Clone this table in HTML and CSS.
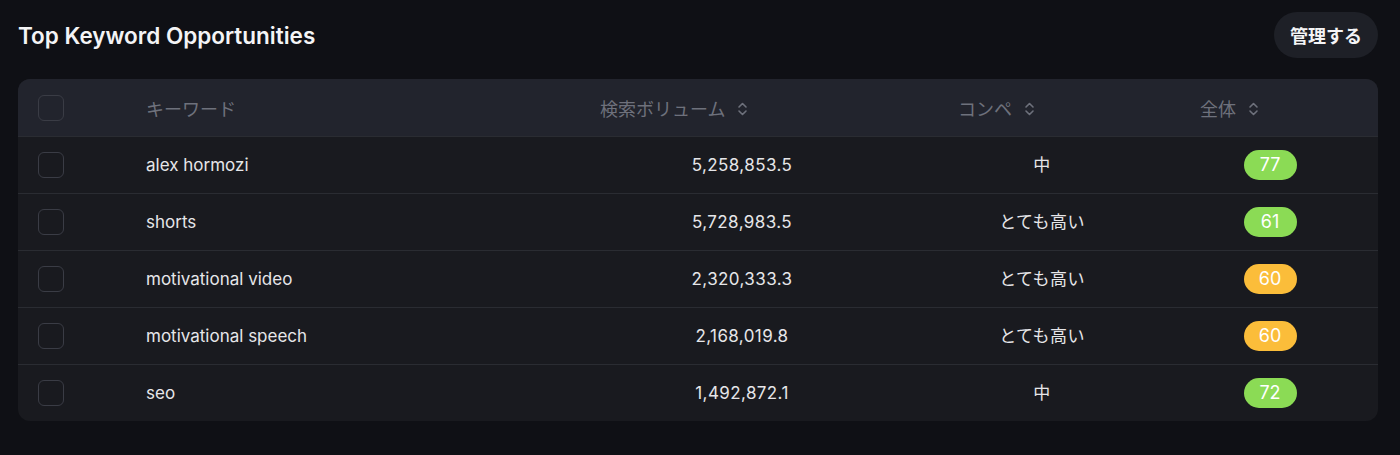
FILE: index.html
```html
<!DOCTYPE html>
<html lang="ja">
<head>
  <meta charset="UTF-8">
  <meta name="viewport" content="width=device-width, initial-scale=1.0">
  <title>Top Keyword Opportunities</title>
  <link rel="stylesheet" href="styles.css">
</head>
<body>
  <div class="panel">
    <div class="panel-head">
      <h2>Top Keyword Opportunities</h2>
      <button class="manage">管理する</button>
    </div>

    <div class="table">
      <div class="row head">
        <div class="cell check"><span class="box"></span></div>
        <div class="cell kw">キーワード</div>
        <div class="cell vol">検索ボリューム <svg class="sort" viewBox="0 0 10 16"><path d="M1.5 6 5 2.5 8.5 6M1.5 10 5 13.5 8.5 10"/></svg></div>
        <div class="cell comp">コンペ <svg class="sort" viewBox="0 0 10 16"><path d="M1.5 6 5 2.5 8.5 6M1.5 10 5 13.5 8.5 10"/></svg></div>
        <div class="cell score">全体 <svg class="sort" viewBox="0 0 10 16"><path d="M1.5 6 5 2.5 8.5 6M1.5 10 5 13.5 8.5 10"/></svg></div>
      </div>

      <div class="row">
        <div class="cell check"><span class="box"></span></div>
        <div class="cell kw">alex hormozi</div>
        <div class="cell vol">5,258,853.5</div>
        <div class="cell comp jp">中</div>
        <div class="cell score"><span class="badge green">77</span></div>
      </div>
      <div class="row">
        <div class="cell check"><span class="box"></span></div>
        <div class="cell kw">shorts</div>
        <div class="cell vol">5,728,983.5</div>
        <div class="cell comp jp">とても高い</div>
        <div class="cell score"><span class="badge green">61</span></div>
      </div>
      <div class="row">
        <div class="cell check"><span class="box"></span></div>
        <div class="cell kw">motivational video</div>
        <div class="cell vol">2,320,333.3</div>
        <div class="cell comp jp">とても高い</div>
        <div class="cell score"><span class="badge orange">60</span></div>
      </div>
      <div class="row">
        <div class="cell check"><span class="box"></span></div>
        <div class="cell kw">motivational speech</div>
        <div class="cell vol">2,168,019.8</div>
        <div class="cell comp jp">とても高い</div>
        <div class="cell score"><span class="badge orange">60</span></div>
      </div>
      <div class="row">
        <div class="cell check"><span class="box"></span></div>
        <div class="cell kw">seo</div>
        <div class="cell vol">1,492,872.1</div>
        <div class="cell comp jp">中</div>
        <div class="cell score"><span class="badge green">72</span></div>
      </div>
    </div>
  </div>
</body>
</html>
```

FILE: styles.css
```css
/* keyword table panel */
* {
  margin: 0;
  padding: 0;
  box-sizing: border-box;
}

body {
  background-color: #0f1015;
  font-family: Inter, "Noto Sans CJK JP", sans-serif;
  color: #e6e6e9;
}

.panel {
  padding: 12px 22px 0 18px;
}

.panel-head {
  display: flex;
  justify-content: space-between;
  align-items: center;
  height: 46px;
  margin-bottom: 21px;
}

.panel-head h2 {
  font-size: 22.5px;
  font-weight: 600;
  color: #f4f4f6;
}

.manage {
  height: 46px;
  padding: 0 16px;
  border: none;
  border-radius: 23px;
  background-color: #1e2027;
  color: #f4f4f6;
  font-family: "Noto Sans CJK JP", sans-serif;
  font-size: 18px;
  font-weight: 700;
}

.table {
  background-color: #191a1f;
  border-radius: 12px;
  overflow: hidden;
}

.row {
  display: grid;
  grid-template-columns: 128px 454px 284px 74px 168px 74px 140px 38px;
  height: 57px;
  align-items: center;
  border-top: 1px solid #2a2c32;
  font-size: 17px;
}

.row.head {
  background-color: #22242d;
  border-top: none;
  color: #6e717c;
  font-size: 18px;
}

.cell {
  display: flex;
  align-items: center;
}

.check {
  grid-column: 1;
  padding-left: 20px;
}

.box {
  width: 26px;
  height: 26px;
  border: 1.5px solid #3a3c45;
  border-radius: 6px;
}

.kw {
  grid-column: 2;
}

.vol {
  grid-column: 3;
  justify-content: center;
  letter-spacing: 0.4px;
}

.comp {
  grid-column: 5;
  justify-content: center;
  letter-spacing: 0.4px;
}

.jp {
  margin-top: -3px;
}

.score {
  grid-column: 7;
  justify-content: center;
}

.head .vol,
.head .comp,
.head .score {
  justify-content: flex-start;
  letter-spacing: 0;
}

.sort {
  width: 11px;
  height: 16px;
  margin-left: 12px;
  margin-top: 2px;
  fill: none;
  stroke: #6e717c;
  stroke-width: 1.6;
  stroke-linecap: round;
  stroke-linejoin: round;
}

.badge {
  display: inline-block;
  min-width: 53px;
  height: 30px;
  line-height: 30px;
  padding: 0 12px;
  border-radius: 15px;
  text-align: center;
  color: #fff;
  font-size: 18px;
}

.green {
  background-color: #8bdb55;
}

.orange {
  background-color: #fbbd3a;
}
```
